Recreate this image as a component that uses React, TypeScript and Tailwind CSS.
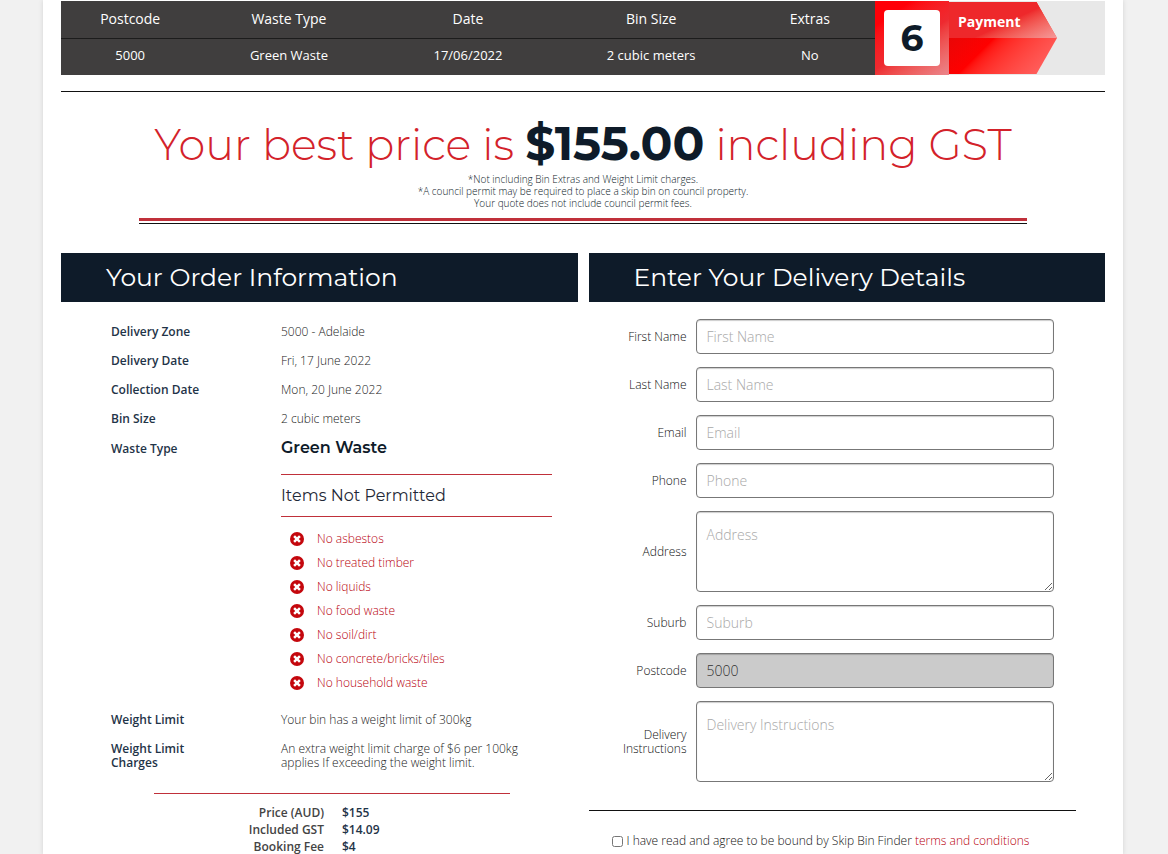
import React from 'react';

const summary = [
  { label: 'Postcode', value: '5000', width: 'w-[17%]' },
  { label: 'Waste Type', value: 'Green Waste', width: 'w-[22%]' },
  { label: 'Date', value: '17/06/2022', width: 'w-[22%]' },
  { label: 'Bin Size', value: '2 cubic meters', width: 'w-[23%]' },
  { label: 'Extras', value: 'No', width: 'w-[16%]' },
];

const orderInfo = [
  { label: 'Delivery Zone', value: '5000 - Adelaide' },
  { label: 'Delivery Date', value: 'Fri, 17 June 2022' },
  { label: 'Collection Date', value: 'Mon, 20 June 2022' },
  { label: 'Bin Size', value: '2 cubic meters' },
];

const notPermitted = [
  'No asbestos',
  'No treated timber',
  'No liquids',
  'No food waste',
  'No soil/dirt',
  'No concrete/bricks/tiles',
  'No household waste',
];

const totals = [
  { label: 'Price (AUD)', value: '$155' },
  { label: 'Included GST', value: '$14.09' },
  { label: 'Booking Fee', value: '$4' },
];

const fields = [
  { id: 'first-name', label: 'First Name' },
  { id: 'last-name', label: 'Last Name' },
  { id: 'email', label: 'Email', type: 'email' },
  { id: 'phone', label: 'Phone', type: 'tel' },
  { id: 'address', label: 'Address', multiline: true },
  { id: 'suburb', label: 'Suburb' },
  { id: 'postcode', label: 'Postcode', value: '5000' },
  { id: 'instructions', label: 'Delivery Instructions', multiline: true },
];

const fieldClass =
  'block w-full rounded border border-[#777] px-[10px] text-sm text-[#333] placeholder:text-[#a8a8a8] shadow-[inset_0_1px_1px_rgba(0,0,0,0.2)]';

const CrossIcon = () => (
  <svg viewBox="0 0 14 14" className="h-[14px] w-[14px] shrink-0" aria-hidden="true">
    <circle cx="7" cy="7" r="7" fill="#c4070d" />
    <path d="M4.1 4.1 9.9 9.9M9.9 4.1 4.1 9.9" stroke="#fff" strokeWidth="2.5" />
  </svg>
);

const PanelTitle = ({ children }: { children: React.ReactNode }) => (
  <h2 className="bg-[#0e1b29] px-[45px] font-[Montserrat,Inter,sans-serif] text-[25px] leading-[49px] font-normal text-white">
    {children}
  </h2>
);

const StepBar = () => (
  <div className="flex bg-[#e8e8e8]">
    <table className="flex-1 table-fixed border-collapse bg-[#403e3e] text-center text-white">
      <thead>
        <tr className="h-[37px] border-b border-[#1c1c1c] text-sm">
          {summary.map((item) => (
            <th key={item.label} className={`font-normal ${item.width}`}>
              {item.label}
            </th>
          ))}
        </tr>
      </thead>
      <tbody>
        <tr className="h-[37px] text-[13px]">
          {summary.map((item) => (
            <td key={item.label} className="pb-0.5">
              {item.value}
            </td>
          ))}
        </tr>
      </tbody>
    </table>
    <div className="flex w-[74px] items-center justify-center bg-linear-145 from-[#ff0008] from-20% via-[#ee2a30] via-55% to-[#ea868c]">
      <span className="flex h-14 w-14 items-center justify-center rounded bg-white font-[Montserrat,Inter,sans-serif] text-4xl font-bold text-[#0e1b29]">
        6
      </span>
    </div>
    <div className="w-[156px] py-px">
      <div className="h-[72px] w-[108px] bg-linear-135 from-[#d80a0a] via-[#f00] via-45% to-[#ff6a6a] [clip-path:polygon(0_0,81%_0,100%_50%,81%_100%,0_100%)]">
        <div className="h-9 bg-linear-155 from-[#ee282b] from-55% to-[#f49a9b] px-[9px] pt-[10px] text-sm leading-5 font-bold text-white">
          Payment
        </div>
      </div>
    </div>
  </div>
);

const OrderInformation = () => (
  <section>
    <PanelTitle>Your Order Information</PanelTitle>
    <dl className="grid grid-cols-[170px_1fr] gap-y-[15px] pt-[23px] pr-[26px] pl-[50px] text-xs leading-[14px] font-light text-[#222]">
      {orderInfo.map((row) => (
        <React.Fragment key={row.label}>
          <dt className="font-semibold text-[#1f3448]">{row.label}</dt>
          <dd>{row.value}</dd>
        </React.Fragment>
      ))}
      <dt className="pt-px font-semibold text-[#1f3448]">Waste Type</dt>
      <dd>
        <h3 className="font-[Montserrat,Inter,sans-serif] text-base leading-[14px] font-semibold text-[#0e1b29]">
          Green Waste
        </h3>
        <div className="mt-[19px] border-y border-[#c0303a]">
          <h4 className="font-[Montserrat,Inter,sans-serif] text-base leading-[41px] font-normal text-[#1f2937]">
            Items Not Permitted
          </h4>
        </div>
        <ul className="mt-[10px] mb-[3px] pl-[9px] leading-6 text-[#b8000c]">
          {notPermitted.map((item) => (
            <li key={item} className="flex items-center gap-[13px]">
              <CrossIcon />
              {item}
            </li>
          ))}
        </ul>
      </dd>
      <dt className="font-semibold text-[#1f3448]">Weight Limit</dt>
      <dd>Your bin has a weight limit of 300kg</dd>
      <dt className="pr-20 font-semibold text-[#1f3448]">Weight Limit Charges</dt>
      <dd>An extra weight limit charge of $6 per 100kg applies If exceeding the weight limit.</dd>
    </dl>
    <hr className="mt-[23px] ml-[18%] w-[69%] border-[#c0303a]" />
    <dl className="mt-[10px] grid grid-cols-[263px_1fr] gap-x-[18px] text-xs leading-[17px] font-semibold">
      {totals.map((row) => (
        <React.Fragment key={row.label}>
          <dt className="text-right text-[#444]">{row.label}</dt>
          <dd className="text-[#1f3448]">{row.value}</dd>
        </React.Fragment>
      ))}
    </dl>
  </section>
);

const DeliveryDetails = () => (
  <section>
    <PanelTitle>Enter Your Delivery Details</PanelTitle>
    <form>
      <div className="space-y-[13px] pt-[17px] pr-[51px]">
        {fields.map((field) => (
          <div key={field.id} className="grid grid-cols-[98px_1fr] items-center gap-x-[9px]">
            <label
              htmlFor={field.id}
              className="text-right text-xs leading-[14px] font-light text-[#111]"
            >
              {field.label}
            </label>
            {field.multiline ? (
              <textarea
                id={field.id}
                placeholder={field.label}
                className={`${fieldClass} h-[81px] bg-white pt-[13px] font-light`}
              />
            ) : (
              <input
                id={field.id}
                type={field.type || 'text'}
                placeholder={field.label}
                defaultValue={field.value}
                disabled={Boolean(field.value)}
                className={`${fieldClass} h-[35px] bg-white font-light disabled:bg-[#cbcbcb]`}
              />
            )}
          </div>
        ))}
      </div>
      <hr className="mt-[28px] mr-[29px] border-[#111]" />
      <div className="mt-[21px] flex items-center gap-1 pl-[23px] text-xs leading-[18px] font-light text-[#111]">
        <input id="terms" type="checkbox" className="h-[11px] w-[11px]" />
        <label htmlFor="terms">
          I have read and agree to be bound by Skip Bin Finder{' '}
          <a href="#terms" className="text-[#b8000c]">
            terms and conditions
          </a>
        </label>
      </div>
    </form>
  </section>
);

const App: React.FC = () => {
  return (
    <div className="min-h-screen bg-[#f1f1f1] pr-[45px] pl-[43px] font-['Open_Sans',sans-serif]">
      <main className="min-h-screen bg-white px-[18px] pt-px shadow-[0_0_5px_rgba(0,0,0,0.12)]">
        <StepBar />
        <hr className="mt-4 border-[#111]" />

        {/* Price */}
        <div className="mx-auto w-[85%] text-center text-[10px] leading-3 font-light text-[#0e1b29]">
          <h1 className="pt-[24px] font-[Montserrat,Inter,sans-serif] text-[43px] leading-[56px] font-light whitespace-nowrap text-[#d3222a]">
            Your best price is{' '}
            <strong className="text-[47px] font-bold text-[#0e1b29]">$155.00</strong> including GST
          </h1>
          <p>*Not including Bin Extras and Weight Limit charges.</p>
          <p>
            *A council permit may be required to place a skip bin on council property.
            <br />
            Your quote does not include council permit fees.
          </p>
          <div className="mt-[9px] h-[6px] border-t-3 border-b border-t-[#c0303a] border-b-[#111]" />
        </div>

        <div className="mt-[29px] grid grid-cols-2 gap-[11px]">
          <OrderInformation />
          <DeliveryDetails />
        </div>
      </main>
    </div>
  );
};

export default App;
